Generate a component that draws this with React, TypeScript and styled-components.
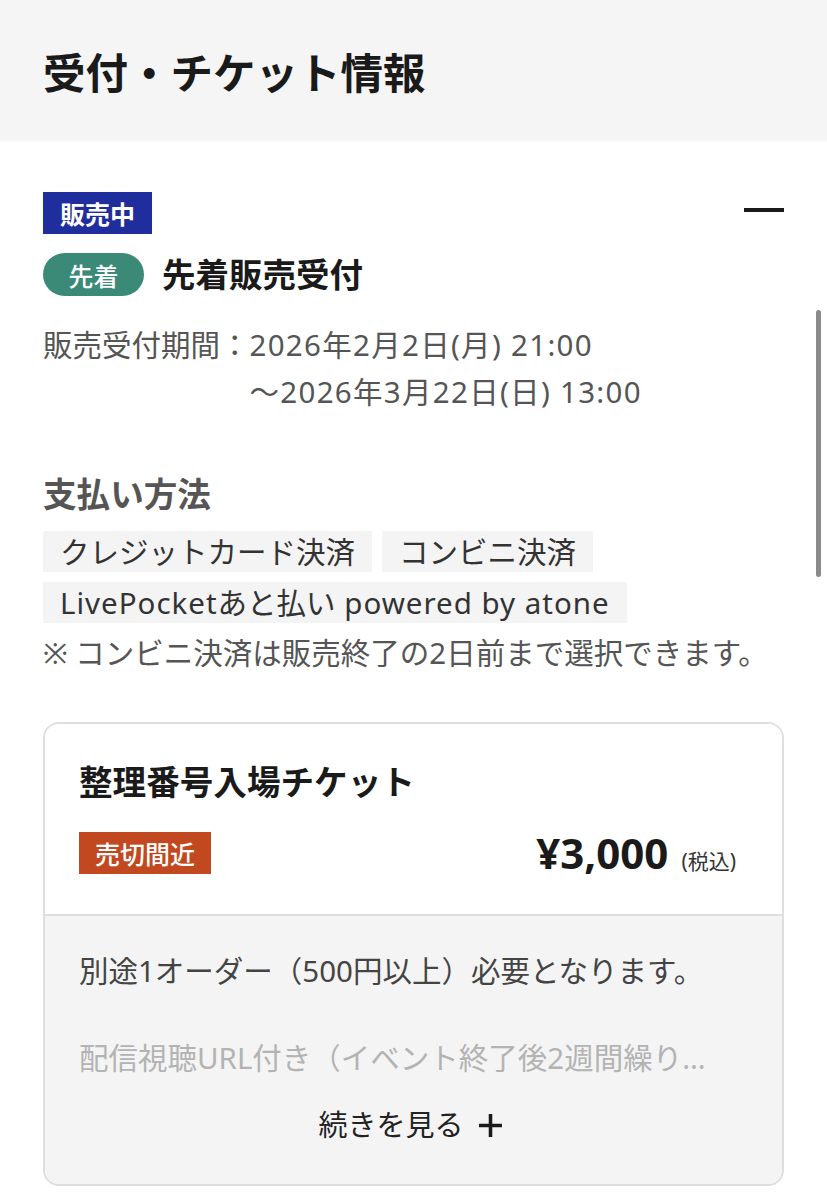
import React from 'react';
import styled, { createGlobalStyle } from 'styled-components';

const GlobalStyle = createGlobalStyle`
  html, body {
    margin: 0;
    padding: 0;
    background: #ffffff;
  }
  body {
    font-family: 'Noto Sans', 'Noto Sans CJK JP', sans-serif;
    color: #1a1a1a;
  }
`;

const Page = styled.div`
  position: relative;
  width: 827px;
  min-height: 1200px;
  background: #fff;
`;

const Header = styled.header`
  height: 141px;
  display: flex;
  align-items: center;
  padding: 0 43px;
  background: #f5f5f5;
`;

const Title = styled.h1`
  margin: 0;
  font-size: 42.5px;
  font-weight: 700;
  color: #1a1a1a;
`;

const Section = styled.section`
  padding: 51px 43px 40px;
`;

const TopRow = styled.div`
  display: flex;
  align-items: center;
  justify-content: space-between;
`;

const StatusBadge = styled.span`
  display: inline-flex;
  align-items: center;
  height: 42px;
  padding: 0 17px;
  background: #1f2e9c;
  color: #fff;
  font-size: 25px;
  font-weight: 700;
`;

const CollapseButton = styled.button`
  width: 40px;
  height: 20px;
  margin-bottom: 6px;
  padding: 0;
  border: none;
  background: transparent;
  display: flex;
  align-items: center;
  &::before {
    content: '';
    display: block;
    width: 40px;
    height: 3.5px;
    background: #1a1a1a;
  }
`;

const SaleRow = styled.div`
  display: flex;
  align-items: center;
  gap: 18px;
  margin-top: 19px;
`;

const TypePill = styled.span`
  display: inline-flex;
  align-items: center;
  justify-content: center;
  width: 101px;
  height: 43px;
  border-radius: 22px;
  background: #3b8a78;
  color: #fff;
  font-size: 25px;
  font-weight: 500;
`;

const SaleTitle = styled.h2`
  margin: 0;
  font-size: 33.5px;
  line-height: 43px;
  font-weight: 700;
  color: #1a1a1a;
`;

const Period = styled.div`
  display: grid;
  grid-template-columns: auto 1fr;
  margin-top: 25px;
  font-size: 29.5px;
  line-height: 47px;
  color: #555;
`;

const PeriodValue = styled.div`
  display: flex;
  flex-direction: column;
  letter-spacing: 1.3px;
`;

const SubHeading = styled.h3`
  margin: 57px 0 0;
  font-size: 33.6px;
  line-height: 44px;
  font-weight: 700;
  color: #555;
`;

const TagList = styled.div`
  display: flex;
  flex-wrap: wrap;
  gap: 10px;
  margin-top: 15px;
`;

const Tag = styled.span`
  display: inline-block;
  height: 41px;
  line-height: 41px;
  padding: 0 17px;
  background: #f4f4f4;
  color: #333;
  font-size: 29.5px;
  white-space: nowrap;
`;

const Latin = styled.span`
  letter-spacing: 1px;
`;

const Note = styled.p`
  margin: 8px 0 0;
  font-size: 29.5px;
  line-height: 44px;
  color: #555;
  white-space: nowrap;
`;

const TicketCard = styled.div`
  margin-top: 47px;
  border: 2px solid #dedede;
  border-radius: 16px;
  overflow: hidden;
`;

const TicketTop = styled.div`
  padding: 35px 46px 33px 34px;
  background: #fff;
  border-bottom: 2px solid #dedede;
`;

const TicketName = styled.h3`
  margin: 0;
  font-size: 33.6px;
  line-height: 46px;
  font-weight: 700;
  color: #1a1a1a;
`;

const PriceRow = styled.div`
  display: flex;
  align-items: center;
  justify-content: space-between;
  margin-top: 19px;
`;

const StockBadge = styled.span`
  display: inline-flex;
  align-items: center;
  height: 42px;
  padding: 0 16px;
  background: #c2491f;
  color: #fff;
  font-size: 25px;
  font-weight: 500;
`;

const Price = styled.div`
  display: flex;
  align-items: baseline;
  gap: 13px;
`;

const PriceAmount = styled.span`
  font-size: 42px;
  font-weight: 700;
  color: #1a1a1a;
`;

const TaxNote = styled.span`
  font-size: 21px;
  color: #333;
`;

const TicketBody = styled.div`
  padding: 33px 40px 37px 34px;
  background: #f4f4f4;
`;

const BodyText = styled.p<{ $faded?: boolean }>`
  margin: ${({ $faded }) => ($faded ? '43px 0 0' : '0')};
  font-size: 29.5px;
  line-height: 44px;
  color: ${({ $faded }) => ($faded ? '#b3b3b3' : '#444')};
  white-space: nowrap;
  overflow: hidden;
`;

const MoreButton = styled.button`
  display: flex;
  align-items: center;
  justify-content: center;
  gap: 14px;
  width: 100%;
  margin-top: 23px;
  padding: 0;
  border: none;
  background: transparent;
  font-family: inherit;
  font-size: 29px;
  line-height: 44px;
  color: #222;
`;

const ScrollThumb = styled.div`
  position: absolute;
  top: 310px;
  right: 6px;
  width: 5px;
  height: 267px;
  border-radius: 3px;
  background: #8a8a8a;
`;

const PlusIcon: React.FC = () => (
  <svg width="25" height="25" viewBox="0 0 24 24">
    <path d="M12 1v22M1 12h22" stroke="#1a1a1a" strokeWidth="3.4" />
  </svg>
);

const App: React.FC = () => {
  return (
    <Page>
      <GlobalStyle />
      <Header>
        <Title>受付・チケット情報</Title>
      </Header>
      <Section>
        <TopRow>
          <StatusBadge>販売中</StatusBadge>
          <CollapseButton aria-label="閉じる" />
        </TopRow>
        <SaleRow>
          <TypePill>先着</TypePill>
          <SaleTitle>先着販売受付</SaleTitle>
        </SaleRow>
        <Period>
          <span>販売受付期間：</span>
          <PeriodValue>
            <span>2026年2月2日(月) 21:00</span>
            <span>～2026年3月22日(日) 13:00</span>
          </PeriodValue>
        </Period>

        <SubHeading>支払い方法</SubHeading>
        <TagList>
          <Tag>クレジットカード決済</Tag>
          <Tag>コンビニ決済</Tag>
          <Tag>
            <Latin>LivePocket</Latin>あと払い<Latin> powered by atone</Latin>
          </Tag>
        </TagList>
        <Note>※ コンビニ決済は販売終了の2日前まで選択できます。</Note>

        <TicketCard>
          <TicketTop>
            <TicketName>整理番号入場チケット</TicketName>
            <PriceRow>
              <StockBadge>売切間近</StockBadge>
              <Price>
                <PriceAmount>¥3,000</PriceAmount>
                <TaxNote>(税込)</TaxNote>
              </Price>
            </PriceRow>
          </TicketTop>
          <TicketBody>
            <BodyText>別途1オーダー（500円以上）必要となります。</BodyText>
            <BodyText $faded>配信視聴URL付き（イベント終了後2週間繰り…</BodyText>
            <MoreButton>
              続きを見る
              <PlusIcon />
            </MoreButton>
          </TicketBody>
        </TicketCard>
      </Section>
      <ScrollThumb />
    </Page>
  );
};

export default App;
